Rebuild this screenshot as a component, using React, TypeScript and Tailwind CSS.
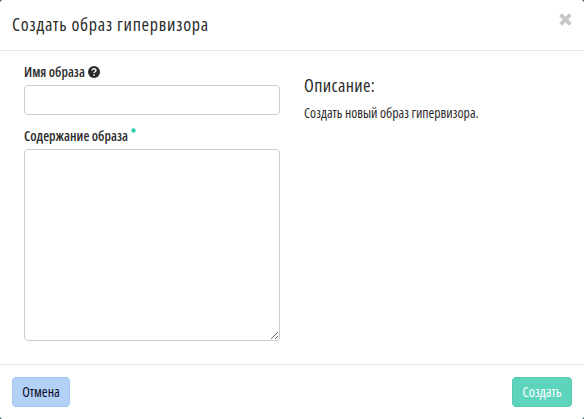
export default function App() {
  return (
    <div className="w-[584px] h-[419px] bg-[#24484a] overflow-hidden font-['Open_Sans',sans-serif] font-stretch-extra-condensed">
      <div className="h-full flex flex-col bg-white rounded-[3px] text-[#2b2b2b]">
        <header className="h-[51px] shrink-0 border-b border-[#e5e5e5] flex justify-between pl-3 pr-[12px]">
          <h1 className="text-[18px] leading-[26px] mt-[11px] tracking-[0.76px] font-normal">Создать образ гипервизора</h1>
          <svg width="15" height="15" viewBox="0 0 15 15" className="mt-[12px] mr-[-1px]"><path d="M2.6 2.6 L12.4 12.4 M12.4 2.6 L2.6 12.4" stroke="#c8c8c8" strokeWidth="3.8" /></svg>
        </header>
        <main className="flex-1 flex pl-6 pr-3 pt-[11px]">
          <div className="w-[256px] shrink-0">
            <label className="flex items-center gap-[3px] h-[20px] mb-[3px] text-[13.6px] font-semibold">
              Имя образа
              <svg width="12" height="12" viewBox="0 0 11 11"><circle cx="5.5" cy="5.5" r="5.5" fill="#2b2b2b"/><path d="M3.7 4.2 C3.8 2 7.3 2 7.3 4.1 C7.3 5.2 5.5 5.3 5.5 6.5" stroke="#fff" strokeWidth="1.3" fill="none"/><rect x="4.8" y="7.5" width="1.4" height="1.4" fill="#fff"/></svg>
            </label>
            <input className="block w-full h-[30px] border border-[#cccccc] rounded-[4px] bg-white" />
            <label className="flex h-[20px] mt-[11px] text-[13.6px] font-semibold items-center">
              Содержание образа
              <svg width="5" height="5" viewBox="0 0 5 5" className="ml-[3px] mb-[11px]"><circle cx="2.5" cy="2.5" r="2.2" fill="#2fcfae" /></svg>
            </label>
            <textarea className="block w-full h-[192px] mt-[3px] border border-[#cccccc] rounded-[4px] bg-white" />
          </div>
          <div className="ml-6 pt-[13px]">
            <h2 className="text-[18px] leading-[20px] tracking-[0.35px] font-normal">Описание:</h2>
            <p className="mt-[8px] text-[13.8px] leading-[20px]">Создать новый образ гипервизора.</p>
          </div>
        </main>
        <footer className="h-[55px] shrink-0 border-t border-[#e5e5e5] flex items-center justify-between px-3">
          <button className="w-[58px] h-[30px] rounded-[4px] bg-[#b3d0f6] border border-[#a5c6f3] text-[14px] text-[#0b0b2a] pb-[1px]">Отмена</button>
          <button className="w-[60px] h-[30px] rounded-[4px] bg-[#5dd5bd] border border-[#55cdb5] text-[14px] text-white pb-[1px]">Создать</button>
        </footer>
      </div>
    </div>
  );
}
